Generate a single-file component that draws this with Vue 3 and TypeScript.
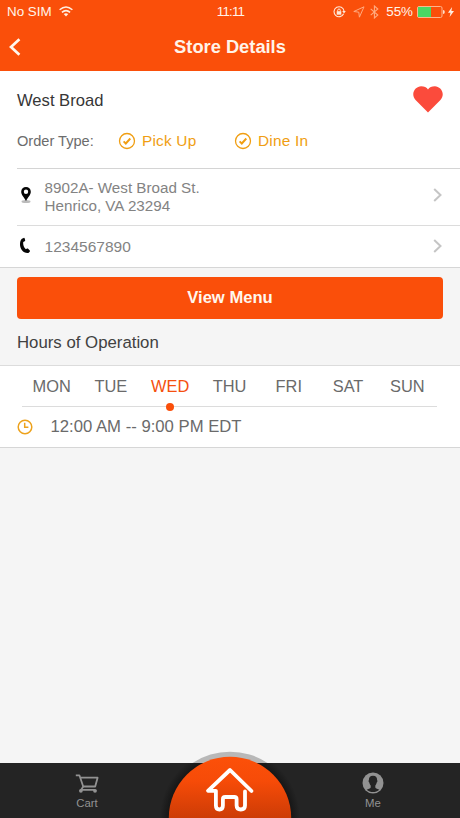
<script setup lang="ts">
import { ref } from 'vue'

const orderTypes: string[] = ['Pick Up', 'Dine In']
const days: string[] = ['MON', 'TUE', 'WED', 'THU', 'FRI', 'SAT', 'SUN']
const selectedDay = ref('WED')
const favorite = ref(true)
</script>

<template>
  <div class="screen">
    <header class="top">
      <div class="status">
        <div class="status-left">
          <span>No SIM</span>
          <svg class="wifi" width="14" height="11" viewBox="0 0 14 11" fill="none" stroke="#fff0e2" stroke-width="1.5">
            <path d="M.6 3.800Q7-1.800 13.400 3.800M2.900 6.400Q7 2.800 11.100 6.400" />
            <path d="M7 10.500 4.700 8.100Q7 6.200 9.300 8.100Z" fill="#fff0e2" stroke="none" />
          </svg>
        </div>
        <span class="clock">11:11</span>
        <div class="status-right">
          <svg width="13" height="12" viewBox="0 0 13 12" fill="none" stroke="#ffe9d8">
            <path d="M10.6 7.8A5 5 0 1 1 11 5" stroke-width="1.1" />
            <path d="M9.2 5h3.6L11 7.4z" fill="#ffe9d8" stroke="none" />
            <path d="M4.7 5.4V4.3a1.3 1.3 0 0 1 2.6 0v1.1" />
            <path d="M3.7 5.2h4.6v3.5H3.7z" fill="#ffe9d8" stroke="none" />
          </svg>
          <svg class="location" width="12" height="12" viewBox="0 0 12 12" fill="none" stroke="#ffab80" stroke-width="1">
            <path d="M11 .8.8 5.500l5 .7.6 5z" />
          </svg>
          <svg class="bluetooth" width="9" height="14" viewBox="0 0 9 14" fill="none" stroke="#ffab80" stroke-width="1.1">
            <path d="M.7 3.8 7.800 10 4.400 13V1l3.400 3-7.100 6.200" />
          </svg>
          <span class="percent">55%</span>
          <svg class="battery" width="28" height="12" viewBox="0 0 28 12">
            <rect x=".5" y=".5" width="24.5" height="11" rx="1.5" fill="none" stroke="#ffb58d" />
            <path d="M1 1h13v10H1z" fill="#4bd763" />
            <path d="M26 4q1.8 0 1.8 2T26 8z" fill="#ffe0cb" />
          </svg>
          <svg class="bolt" width="6" height="10" viewBox="0 0 6 10" fill="#fff0e2">
            <path d="M4.1 0 0 5.7h2.5L1.6 10 6 4.1H3.4z" />
          </svg>
        </div>
      </div>
      <div class="navbar">
        <svg class="back" width="12" height="18" viewBox="0 0 12 18" fill="none" stroke="#fff7ee" stroke-width="2.7">
          <path d="M10.4 1.2 2 9l8.400 7.800" />
        </svg>
        <h1>Store Details</h1>
      </div>
    </header>

    <section class="store">
      <div class="summary">
        <div class="name-row">
          <h2>West Broad</h2>
          <svg class="heart" width="30" height="27" viewBox="0 0 30 27" @click="favorite = !favorite">
            <path :fill="favorite ? '#fb4b3c' : '#ccc'" d="M15 26.4 2.8 14.2C-3.2 7.7 2.6.3 8.1.3c3.2 0 5.5 1.1 6.9 3.1C16.4 1.4 18.7.3 21.9.3c5.500 0 11.300 7.400 5.300 13.900z" />
          </svg>
        </div>
        <div class="types">
          <span class="label">Order Type:</span>
          <span v-for="type in orderTypes" :key="type" class="type">
            <svg width="18" height="18" viewBox="0 0 18 18" fill="none" stroke="currentColor">
              <circle cx="9" cy="9" r="7.5" stroke-width="1.3" />
              <path d="m5.6 9.3 2.2 2.2 4.500-5" stroke-width="1.9" />
            </svg>
            <span>{{ type }}</span>
          </span>
        </div>
      </div>
      <a class="row address">
        <svg class="lead" width="14" height="18" viewBox="0 0 14 18">
          <ellipse cx="7" cy="15.5" rx="4.5" ry="1.5" fill="#bbb" />
          <path fill="#050505" fill-rule="evenodd" d="M7 15C5.2 11.200 2.200 9 2.200 5.700a4.800 4.800 0 0 1 9.600 0C11.800 9 8.800 11.200 7 15zM7 3.500a2.200 2.200 0 1 0 0 4.400 2.200 2.200 0 0 0 0-4.400z" />
        </svg>
        <span class="text">8902A- West Broad St.<br />Henrico, VA 23294</span>
        <svg class="chevron" width="10" height="14" viewBox="0 0 10 14"><path d="m1.200 1 6.300 6-6.300 6" /></svg>
      </a>
      <a class="row phone">
        <svg class="lead" width="14" height="18" viewBox="0 0 14 18">
          <path fill="#050505" d="M2.900 1.700 4.700.9c.5-.2.800 0 .9.400l.6 2c.1.500-.1.800-.5 1L4.200 5c-.3 2.800.6 5.400 2.700 7.300l1.100-.7c.4-.2.8-.2 1.100.2l1.700 1.800c.3.400.3.800-.1 1.100l-1.300 1.200C4.300 16.500 1 12 1 7.500c0-2.600.600-4.700 1.900-5.800z" />
        </svg>
        <span class="text number">1234567890</span>
        <svg class="chevron" width="10" height="14" viewBox="0 0 10 14"><path d="m1.200 1 6.300 6-6.300 6" /></svg>
      </a>
    </section>

    <section class="actions">
      <button class="menu-button" type="button">View Menu</button>
      <h3>Hours of Operation</h3>
    </section>

    <section class="hours">
      <div class="days">
        <span v-for="day in days" :key="day" class="day" :class="{ active: day === selectedDay }" @click="selectedDay = day">{{ day }}</span>
      </div>
      <div class="time">
        <svg width="16" height="16" viewBox="0 0 16 16" fill="none" stroke="#eda21c" stroke-width="1.5">
          <circle cx="8" cy="8" r="6.8" />
          <path d="M7.700 3.800v4.400h3.700" />
        </svg>
        <span>12:00 AM -- 9:00 PM EDT</span>
      </div>
    </section>

    <nav class="tabs">
      <a class="tab cart">
        <svg width="24" height="20" viewBox="0 0 24 20" fill="none" stroke="#929292" stroke-width="1.8">
          <path d="M.8 1.300h3.600l3.800 11.200h12L22.600 3.700H5.300" stroke-linejoin="round" />
          <path d="m8.200 12.500-2 3.400h14" />
          <circle cx="5.900" cy="16.800" r="1.900" fill="#929292" stroke="none" />
          <circle cx="20" cy="16.800" r="1.900" fill="#929292" stroke="none" />
        </svg>
        <span>Cart</span>
      </a>
      <a class="tab me">
        <svg width="22" height="22" viewBox="0 0 22 22">
          <circle cx="11" cy="11" r="10.5" fill="#929292" />
          <path fill="#242424" d="M11 3.700c3 0 4.300 1.900 4.100 4.500.6.200.4 1.800-.4 2.300-.3 1.400-.8 2.300-1.400 2.900v2c.5 1.300 2.500 1.500 4 2.300-3.600 3.200-9 3.200-12.600 0 1.500-.8 3.500-1 4-2.300v-2c-.6-.6-1.100-1.500-1.400-2.900-.8-.5-1-2.100-.4-2.300C6.700 5.600 8 3.700 11 3.700z" />
        </svg>
        <span>Me</span>
      </a>
      <svg class="home" width="160" height="70" viewBox="0 0 160 70">
        <defs>
          <linearGradient id="disc" x1="0" y1="9" x2="0" y2="70" gradientUnits="userSpaceOnUse">
            <stop offset="0" stop-color="#fc5009" />
            <stop offset=".4" stop-color="#f64b08" />
            <stop offset="1" stop-color="#cd3c06" />
          </linearGradient>
          <radialGradient id="shade" cx="80" cy="70" r="70" gradientUnits="userSpaceOnUse">
            <stop offset=".86" stop-color="#151515" />
            <stop offset="1" stop-color="#151515" stop-opacity="0" />
          </radialGradient>
        </defs>
        <path d="M42.500 15a67.700 67.700 0 0 1 75 0z" fill="#b8b8b8" />
        <path d="M0 15h160v55H0z" fill="url(#shade)" />
        <circle cx="80" cy="70" r="61.200" fill="url(#disc)" />
        <path d="m101.500 43-21.500-21-22 20.800h7.900v14.700q0 4 3.500 4t3.500-4v-6.200q0-2.300 2.300-2.300h9.100q2.300 0 2.300 2.300v6.200q0 4 4.200 4t4.200-4V43.500" fill="none" stroke="#fff" stroke-width="3.800" stroke-linecap="round" stroke-linejoin="round" />
      </svg>
    </nav>
  </div>
</template>

<style>
body {
  margin: 0;
}
</style>

<style scoped>
.screen {
  box-sizing: border-box;
  width: 460px;
  height: 818px;
  display: flex;
  flex-direction: column;
  overflow: hidden;
  background: #f5f5f5;
  font-family: "Liberation Sans", Arial, sans-serif;
  white-space: nowrap;
}
.screen * {
  box-sizing: border-box;
}
svg {
  display: block;
  flex: none;
}
h1, h2, h3 {
  margin: 0;
  font-weight: 400;
}
.top {
  height: 71px;
  background: #fa4f0a;
  color: #fff4e9;
}
.status {
  height: 24px;
  display: grid;
  grid-template-columns: 1fr auto 1fr;
  align-items: center;
  padding: 0 6px 0 7px;
  font-size: 13.4px;
  line-height: 24px;
}
.status-left,
.status-right {
  display: flex;
  align-items: center;
}
.wifi {
  margin: -1px 0 0 7px;
}
.clock {
  letter-spacing: -0.8px;
}
.status-right {
  justify-content: flex-end;
}
.location {
  margin-left: 7px;
}
.bluetooth {
  margin-left: 5px;
}
.percent {
  margin-left: 7px;
}
.battery {
  margin-left: 4px;
}
.bolt {
  margin-left: 3px;
}
.navbar {
  height: 47px;
  display: grid;
  grid-template-columns: 40px 1fr 40px;
  align-items: center;
}
.back {
  margin: -2px 0 0 9px;
}
h1 {
  font-size: 18.3px;
  font-weight: 700;
  line-height: 22px;
  text-align: center;
  padding-bottom: 2px;
}
.store {
  height: 197px;
  display: flex;
  flex-direction: column;
  padding-left: 17px;
  background: #fff;
  border-bottom: 1px solid #d6d6d6;
}
.summary {
  height: 98px;
  border-bottom: 1px solid #d4d4d4;
}
.name-row {
  display: flex;
  justify-content: space-between;
  align-items: center;
  height: 57px;
  padding-right: 17.5px;
}
h2 {
  padding-top: 2px;
  font-size: 16.6px;
  color: #363636;
}
.heart {
  margin-top: -1px;
}
.types {
  display: flex;
  align-items: center;
  height: 26px;
}
.label {
  width: 101px;
  font-size: 14.6px;
  color: #6c6c6c;
}
.type {
  display: flex;
  align-items: center;
  gap: 6px;
  width: 116px;
  font-size: 15.4px;
  letter-spacing: 0.2px;
  color: #f09e12;
}
.row {
  display: flex;
  align-items: center;
  padding-right: 17px;
}
.address {
  height: 57px;
  border-bottom: 1px solid #dcdcdc;
}
.phone {
  height: 41px;
}
.lead {
  margin-left: 2px;
  margin-right: 11.6px;
}
.address .lead {
  margin-top: -5px;
}
.phone .lead {
  margin-top: -2px;
}
.text {
  flex: 1;
  font-size: 15.2px;
  line-height: 18px;
  color: #838383;
}
.number {
  font-size: 15.5px;
  padding-top: 1px;
}
.chevron {
  fill: none;
  stroke: #c5c5c5;
  stroke-width: 2;
}
.address .chevron {
  margin-top: -5px;
}
.phone .chevron {
  margin-top: -2px;
}
.actions {
  height: 97px;
  padding: 9px 17px 0;
}
.menu-button {
  display: block;
  width: 100%;
  height: 42px;
  padding: 0;
  border: 0;
  border-radius: 4px;
  background: #fa4f0a;
  color: #fff7ee;
  font: 700 16.6px/42px "Liberation Sans", Arial, sans-serif;
}
h3 {
  padding-top: 1px;
  font-size: 16.8px;
  line-height: 46px;
  color: #414141;
}
.hours {
  height: 83px;
  padding: 0 17px;
  background: #fff;
  border-top: 1px solid #dcdcdc;
  border-bottom: 1px solid #d6d6d6;
}
.days {
  display: grid;
  grid-template-columns: repeat(7, 1fr);
  height: 41px;
  margin: 0 6px 0 5px;
  border-bottom: 1px solid #dcdcdc;
}
.day {
  position: relative;
  font-size: 16.4px;
  line-height: 41px;
  text-align: center;
  color: #6a6a6a;
}
.active {
  color: #f5500f;
}
.active::after {
  content: "";
  position: absolute;
  left: calc(50% - 4px);
  bottom: -4px;
  width: 8px;
  height: 8px;
  border-radius: 50%;
  background: #fa4f0a;
}
.time {
  display: flex;
  align-items: center;
  gap: 17.5px;
  height: 40px;
  font-size: 16.7px;
  color: #6a6a6a;
}
.tabs {
  position: relative;
  display: flex;
  justify-content: space-between;
  height: 55px;
  margin-top: auto;
  background: #242424;
}
.tab {
  display: flex;
  flex-direction: column;
  align-items: center;
  width: 174px;
  font-size: 11.4px;
  line-height: 14px;
  color: #929292;
}
.cart {
  padding-top: 11px;
  gap: 2px;
}
.me {
  padding-top: 9px;
  gap: 2px;
}
.home {
  position: absolute;
  left: 150px;
  bottom: 0;
}
</style>
